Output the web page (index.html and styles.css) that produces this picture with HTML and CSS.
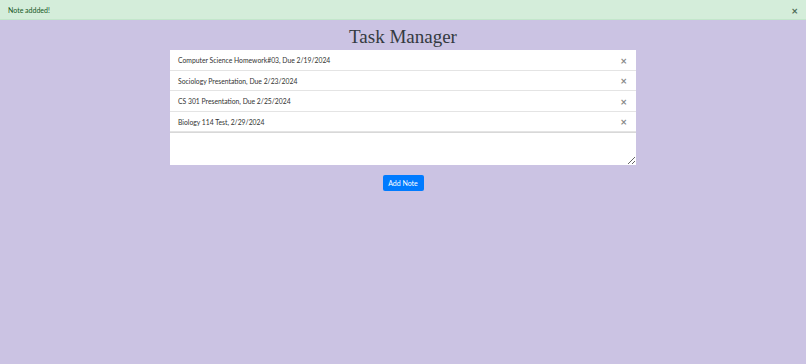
FILE: index.html
```html
<!DOCTYPE html>
<html lang="en">
<head>
    <meta charset="UTF-8">
    <title>Task Manager</title>
    <link rel="stylesheet" href="styles.css">
</head>
<body>
    <div class="alert">
        <span>Note addded!</span>
        <span class="alert-close">&times;</span>
    </div>
    <h1 class="title">Task Manager</h1>
    <div class="notes">
        <ul class="note-list">
            <li class="note">Computer Science Homework#03, Due 2/19/2024<span class="remove">&times;</span></li>
            <li class="note">Sociology Presentation, Due 2/23/2024<span class="remove">&times;</span></li>
            <li class="note">CS 301 Presentation, Due 2/25/2024<span class="remove">&times;</span></li>
            <li class="note">Biology 114 Test, 2/29/2024<span class="remove">&times;</span></li>
        </ul>
        <textarea class="note-input"></textarea>
        <div class="actions">
            <button type="button" class="add-btn">Add Note</button>
        </div>
    </div>
</body>
</html>
```

FILE: styles.css
```css
body {
    margin: 0;
    padding: 0;
    background-color: #cbc3e3;
    font-family: Lato, "Open Sans", sans-serif;
    height: 364px;
}
.alert {
    display: flex;
    justify-content: space-between;
    align-items: center;
    height: 18px;
    padding: 1px 8px 0 8px;
    background-color: #d4edda;
    border-bottom: 1px solid #c3e6cb;
    color: #155724;
    font-size: 7px;
}
.alert-close {
    font-size: 11px;
    font-weight: bold;
    color: #4d6a54;
}
.title {
    margin: 6px 0 2px 0;
    text-align: center;
    font-family: "Liberation Serif", Georgia, serif;
    font-weight: normal;
    font-size: 19px;
    line-height: 22px;
    color: #343a40;
}
.notes {
    width: 466px;
    margin: 0 auto;
}
.note-list {
    list-style: none;
    margin: 0;
    padding: 0;
    background-color: white;
}
.note {
    display: flex;
    justify-content: space-between;
    align-items: center;
    height: 18.5px;
    padding: 1px 8px 0 8px;
    border-bottom: 1px solid #e4e4e4;
    font-size: 6.8px;
    color: #333;
}
.remove {
    font-size: 11px;
    font-weight: bold;
    color: #888;
    margin-right: 1px;
}
.note-input {
    display: block;
    width: 466px;
    height: 33px;
    margin: 0;
    box-sizing: border-box;
    border: none;
    border-top: 1px solid #d8d8d8;
    background-color: white;
}
.actions {
    display: flex;
    justify-content: center;
    margin-top: 10px;
}
.add-btn {
    width: 41px;
    height: 16px;
    padding: 0;
    border: none;
    border-radius: 2px;
    background-color: #007bff;
    color: white;
    font-family: Lato, sans-serif;
    font-size: 7px;
}
```
